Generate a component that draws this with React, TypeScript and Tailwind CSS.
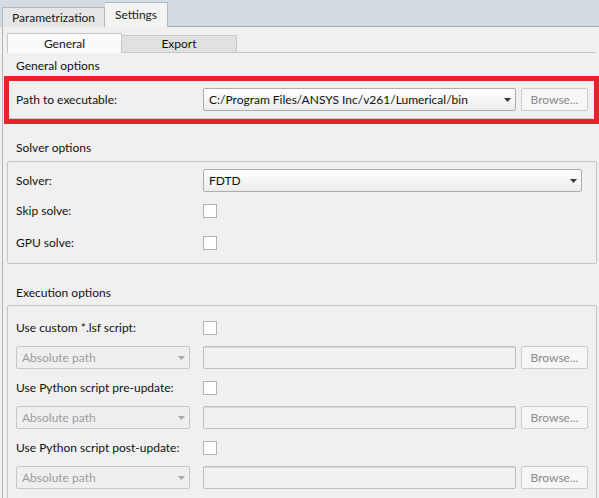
const font = { fontFamily: 'Lato, "Noto Sans", sans-serif' };

function Arrow({ disabled }: { disabled?: boolean }) {
  return (
    <svg width="7" height="4" viewBox="0 0 7 4" className="shrink-0">
      <polygon points="0,0 7,0 3.5,4" fill={disabled ? "#a8a8a8" : "#3a3a3a"} />
    </svg>
  );
}

function Combo({ text, width, disabled }: { text: string; width: string; disabled?: boolean }) {
  return (
    <div
      className={`${width} h-[23px] shrink-0 flex items-center justify-between pl-[5px] pr-[4px] rounded-[2px] border ${
        disabled
          ? "border-[#c8c8c8] bg-[#efefef] text-[#9c9c9c]"
          : "border-[#acacac] bg-gradient-to-b from-[#ffffff] to-[#ececec] text-[#111]"
      }`}
    >
      <span className="truncate">{text}</span>
      <Arrow disabled={disabled} />
    </div>
  );
}

function Browse() {
  return (
    <div className="w-[67px] h-[23px] shrink-0 flex items-center justify-center rounded-[2px] border border-[#cccccc] bg-[#f6f6f6] text-[#8a8a8a]">
      Browse...
    </div>
  );
}

function Field() {
  return <div className="w-[313px] h-[23px] shrink-0 rounded-[2px] border border-[#bdbdbd] bg-[#f0f0f0] shadow-[inset_0_1px_0_#dcdcdc]" />;
}

function Check() {
  return <div className="w-[14px] h-[14px] shrink-0 border border-[#b3b3b3] bg-white" />;
}

function Row({ label, children }: { label: string; children: React.ReactNode }) {
  return (
    <div className="h-[23px] flex items-center">
      <div className="w-[187px] shrink-0">{label}</div>
      {children}
    </div>
  );
}

function SectionLabel({ text, h, pt }: { text: string; h: string; pt: string }) {
  return <div className={`${h} ${pt} pl-[13px] leading-[16px] text-[#111]`}>{text}</div>;
}

function PathRow() {
  return (
    <div className="h-[23px] flex items-center">
      <Combo text="Absolute path" width="w-[174px]" disabled />
      <div className="ml-[13px] flex gap-[5px]">
        <Field />
        <Browse />
      </div>
    </div>
  );
}

export default function App() {
  return (
    <div className="w-[599px] h-[498px] overflow-hidden bg-[#f0f0f0] text-[12px] text-[#111]" style={font}>
      {/* top tabs */}
      <div className="h-[27px] flex items-end bg-[#d4dbe2] pl-[2px]">
        <div className="w-[103px] h-[20px] flex items-center justify-center border border-b-0 border-[#b5b9bd] bg-[#e6e6e6] text-[#1a1a1a]">
          Parametrization
        </div>
        <div className="w-[63px] h-[25px] flex items-center justify-center border border-b-0 border-l-0 border-[#b5b9bd] bg-[#f3f3f3] text-[#1a1a1a]">
          Settings
        </div>
        <div className="flex-1 h-full border-b border-[#a9adb2]" />
      </div>

      {/* pane */}
      <div className="ml-[2px] border-l border-[#b4b4b4] pb-[20px]">
        {/* inner tabs */}
        <div className="pt-[6px] h-[26px] flex items-end pl-[4px]">
          <div className="w-[115px] h-[20px] flex items-center justify-center border border-b-0 border-[#c8c8c8] bg-[#fafafa]">
            General
          </div>
          <div className="w-[115px] h-[18px] flex items-center justify-center border border-l-0 border-[#c8c8c8] bg-[#e1e1e1]">
            Export
          </div>
          <div className="w-[359px] h-full border-b border-[#c2c2c2]" />
        </div>

        <SectionLabel text="General options" h="h-[23px]" pt="pt-[5px]" />

        {/* highlighted general group */}
        <div className="ml-[1px] w-[595px] h-[48px] border-[5px] border-[#e8222b]">
          <div className="h-[38px] pt-[7px] pl-[7px] border-b border-[#c8c8c8] mr-[2px]">
            <Row label="Path to executable:">
              <Combo text="C:/Program Files/ANSYS Inc/v261/Lumerical/bin" width="w-[313px]" />
              <div className="ml-[5px]">
                <Browse />
              </div>
            </Row>
          </div>
        </div>

        <SectionLabel text="Solver options" h="h-[37px]" pt="pt-[16px]" />

        <div className="ml-[4px] w-[590px] h-[103px] border border-[#c6c6c6] rounded-[2px] pl-[8px] pt-[7px]">
          <Row label="Solver:">
            <Combo text="FDTD" width="w-[379px]" />
          </Row>
          <div className="mt-[7px]">
            <Row label="Skip solve:">
              <Check />
            </Row>
          </div>
          <div className="mt-[9px]">
            <Row label="GPU solve:">
              <Check />
            </Row>
          </div>
        </div>

        <SectionLabel text="Execution options" h="h-[41px]" pt="pt-[21px]" />

        <div className="ml-[4px] w-[590px] h-[200px] border border-[#c6c6c6] rounded-[2px] pl-[8px] pt-[10px] flex flex-col gap-[7px]">
          <Row label="Use custom *.lsf script:">
            <Check />
          </Row>
          <PathRow />
          <Row label="Use Python script pre-update:">
            <Check />
          </Row>
          <PathRow />
          <Row label="Use Python script post-update:">
            <Check />
          </Row>
          <PathRow />
        </div>
      </div>
    </div>
  );
}
